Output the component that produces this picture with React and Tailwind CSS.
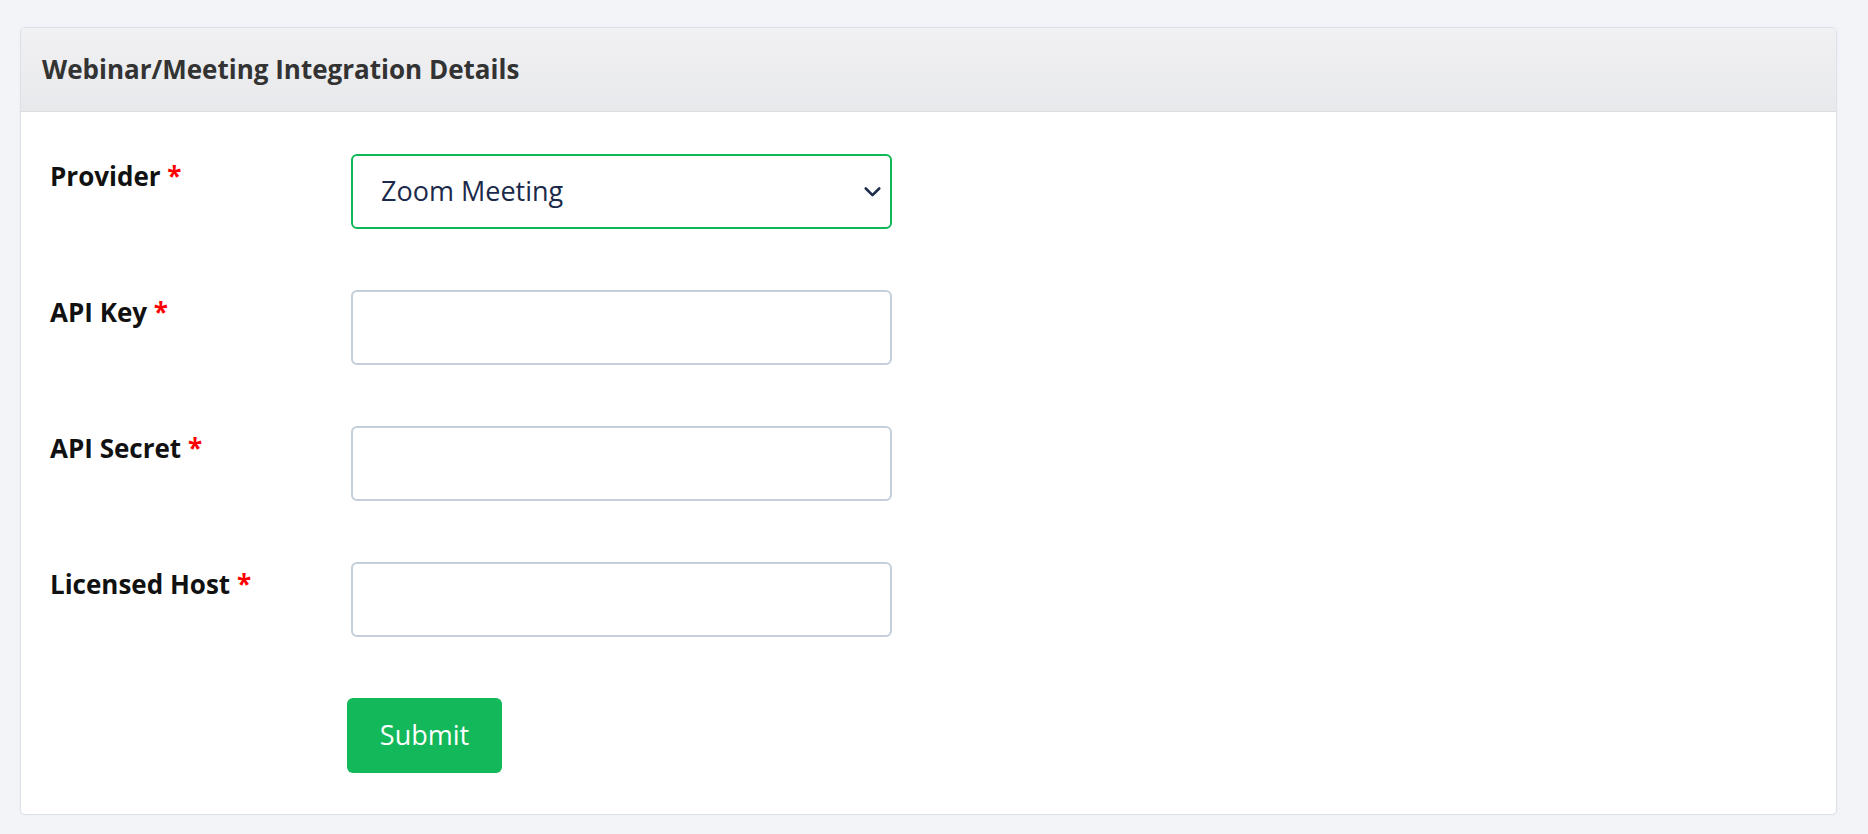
import React from "react";

function Field({ label, children }) {
  return (
    <div className="flex">
      <div className="w-[330px] shrink-0 pt-[3px] pl-[29px]">
        <span className="text-[26px] leading-[39px] font-bold text-[#111111]">
          {label} <span className="text-[#ff0000]">*</span>
        </span>
      </div>
      {children}
    </div>
  );
}

export default function App() {
  return (
    <div
      className="min-h-screen w-full bg-[#f3f4f8] pt-[27px] pl-[20px] pr-[31px]"
      style={{ fontFamily: "'Open Sans', 'Noto Sans', sans-serif" }}
    >
      <div className="h-[788px] rounded-[5px] border border-[#dde1ea] bg-white overflow-hidden shadow-[0_0_3px_rgba(0,0,0,0.04)]">
        <div className="h-[84px] flex items-center pl-[21px] border-b border-[#dcdcdc] bg-gradient-to-b from-[#f1f1f3] to-[#e8e9ec]">
          <h2 className="text-[26px] font-bold text-[#333333]">
            Webinar/Meeting Integration Details
          </h2>
        </div>
        <div className="pt-[42px] flex flex-col gap-[61px]">
          <Field label="Provider">
            <div className="relative w-[541px] h-[75px] rounded-[6px] border-2 border-[#10b759] flex items-center pl-[28px]">
              <span className="text-[27px] text-[#1b2a4a]">Zoom Meeting</span>
              <svg
                className="absolute right-[9px] top-1/2 -translate-y-1/2"
                width="17"
                height="11"
                viewBox="0 0 17 11"
                fill="none"
                stroke="#1f2d4d"
                strokeWidth="2.6"
                strokeLinecap="round"
                strokeLinejoin="round"
              >
                <path d="M1.8 2l6.7 6.7L15.2 2" />
              </svg>
            </div>
          </Field>
          <Field label="API Key">
            <div className="w-[541px] h-[75px] rounded-[6px] border-2 border-[#c5cedb]" />
          </Field>
          <Field label="API Secret">
            <div className="w-[541px] h-[75px] rounded-[6px] border-2 border-[#c5cedb]" />
          </Field>
          <Field label="Licensed Host">
            <div className="w-[541px] h-[75px] rounded-[6px] border-2 border-[#c5cedb]" />
          </Field>
          <div className="pl-[326px]">
            <button className="w-[155px] h-[75px] rounded-[6px] bg-[#12b85a] text-white text-[27px] font-medium">
              Submit
            </button>
          </div>
        </div>
      </div>
    </div>
  );
}
